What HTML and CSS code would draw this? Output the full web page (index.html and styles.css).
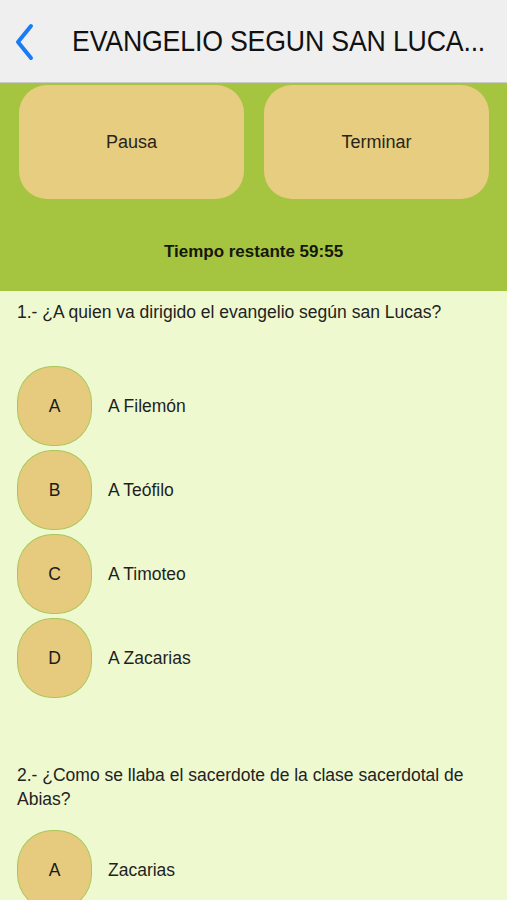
FILE: index.html
```html
<!DOCTYPE html>
<html lang="es">
<head>
<meta charset="utf-8">
<link rel="stylesheet" href="styles.css">
</head>
<body>
<header class="navbar">
  <svg class="back" width="22" height="40" viewBox="0 0 22 40"><path d="M18 4 L5 20 L18 36" fill="none" stroke="#1a7cf5" stroke-width="4" stroke-linecap="round" stroke-linejoin="round"/></svg>
  <h1 class="title">EVANGELIO SEGUN SAN LUCA...</h1>
</header>
<section class="controls">
  <div class="buttons">
    <div class="btn">Pausa</div>
    <div class="btn">Terminar</div>
  </div>
  <div class="timer">Tiempo restante 59:55</div>
</section>
<main class="content">
  <div class="question">
    <p class="qtext">1.- ¿A quien va dirigido el evangelio según san Lucas?</p>
    <div class="options">
      <div class="option"><div class="bubble">A</div><span class="otext">A Filemón</span></div>
      <div class="option"><div class="bubble">B</div><span class="otext">A Teófilo</span></div>
      <div class="option"><div class="bubble">C</div><span class="otext">A Timoteo</span></div>
      <div class="option"><div class="bubble">D</div><span class="otext">A Zacarias</span></div>
    </div>
  </div>
  <div class="question q2">
    <p class="qtext">2.- ¿Como se llaba el sacerdote de la clase sacerdotal de Abias?</p>
    <div class="options">
      <div class="option"><div class="bubble">A</div><span class="otext">Zacarias</span></div>
    </div>
  </div>
</main>
</body>
</html>
```

FILE: styles.css
```css
* { box-sizing: border-box; }
html, body { margin: 0; padding: 0; }
body {
  width: 507px;
  height: 900px;
  overflow: hidden;
  font-family: "Liberation Sans", Arial, sans-serif;
  background: #eef9d0;
  color: #1b1b1b;
}
.navbar {
  height: 83px;
  background: #efefef;
  border-bottom: 1px solid #c9c9c9;
  display: flex;
  align-items: center;
  padding-left: 13px;
}
.back { flex: none; margin-top: 2px; }
.title {
  margin: 0 0 0 37px;
  font-size: 30px;
  font-weight: normal;
  color: #111;
  white-space: nowrap;
  letter-spacing: -0.2px;
  transform: scaleX(0.89);
  transform-origin: left center;
}
.controls {
  background: #a5c440;
  height: 208px;
  padding-top: 2px;
}
.buttons {
  display: flex;
  gap: 20px;
  padding: 0 18px 0 19px;
}
.btn {
  flex: 1;
  height: 114px;
  background: #e6cd80;
  border-radius: 28px;
  display: flex;
  align-items: center;
  justify-content: center;
  font-size: 18px;
  color: #2a2418;
}
.timer {
  text-align: center;
  font-weight: bold;
  font-size: 17px;
  margin-top: 43px;
  color: #15170a;
}
.question { padding: 0 17px; }
.qtext {
  margin: 0;
  font-size: 17.5px;
  line-height: 24px;
  color: #222;
}
.question:first-child .qtext { padding-top: 9px; }
.options {
  display: flex;
  flex-direction: column;
  gap: 4px;
  margin-top: 42px;
}
.q2 { margin-top: 65px; }
.q2 .options { margin-top: 19px; }
.option {
  display: flex;
  align-items: center;
  gap: 16px;
}
.bubble {
  width: 75px;
  height: 80px;
  border-radius: 35px / 36px;
  background: #e6cb7f;
  border: 1.5px solid #a9c65a;
  display: flex;
  align-items: center;
  justify-content: center;
  font-size: 17.5px;
  color: #1b1b1b;
}
.otext { font-size: 17.5px; color: #1f1f1f; }
```
